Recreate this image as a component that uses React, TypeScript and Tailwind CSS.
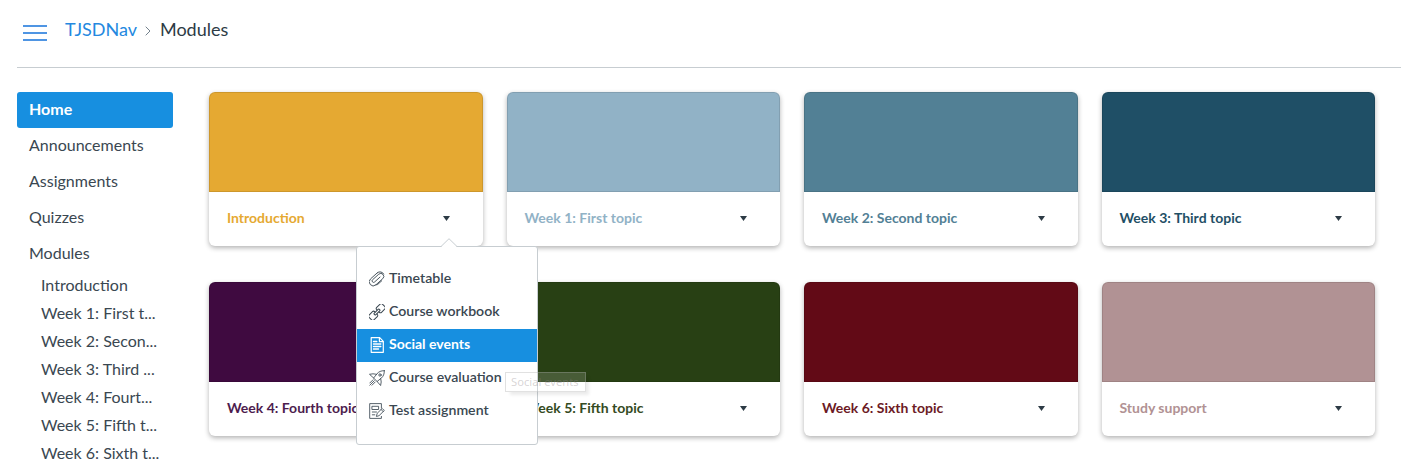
import React from 'react';

const sections = ['Announcements', 'Assignments', 'Quizzes', 'Modules'];
const moduleLinks = [
  'Introduction',
  'Week 1: First t...',
  'Week 2: Secon...',
  'Week 3: Third ...',
  'Week 4: Fourt...',
  'Week 5: Fifth t...',
  'Week 6: Sixth t...',
];

const cards = [
  { title: 'Introduction', bg: 'bg-[#e5a932]', text: 'text-[#e5a932]', menu: true },
  { title: 'Week 1: First topic', bg: 'bg-[#91b2c6]', text: 'text-[#91b2c6]' },
  { title: 'Week 2: Second topic', bg: 'bg-[#528095]', text: 'text-[#528095]' },
  { title: 'Week 3: Third topic', bg: 'bg-[#1f4f66]', text: 'text-[#1f4f66]' },
  { title: 'Week 4: Fourth topic', bg: 'bg-[#3f0a40]', text: 'text-[#4d1c4e]' },
  { title: 'Week 5: Fifth topic', bg: 'bg-[#284014]', text: 'text-[#344a22]' },
  { title: 'Week 6: Sixth topic', bg: 'bg-[#620a16]', text: 'text-[#6c1a25]' },
  { title: 'Study support', bg: 'bg-[#b19294]', text: 'text-[#b19294]' },
];

function Icon({ children }: { children: React.ReactNode }) {
  return (
    <svg
      viewBox="0 0 16 16"
      className="block h-4 w-4 shrink-0"
      fill="none"
      stroke="currentColor"
      strokeWidth="0.85"
      strokeLinejoin="round"
      strokeLinecap="round"
    >
      {children}
    </svg>
  );
}

const ClipIcon = () => (
  <Icon>
    <g transform="rotate(-42 8 8)">
      <path d="M11.500 8H4.200a1.500 1.500 0 0 1 0-3h8.300a3 3 0 0 1 0 6H3.300a4 4 0 0 1-4-4 4 4 0 0 1 4-4h9.200" transform="translate(0 .6)" />
      <path d="M12.500 3.600a4 4 0 0 1 3.800 5.200M3.300 11.600a4 4 0 0 0 1.500.9h5.500" />
    </g>
  </Icon>
);

const LinkIcon = () => (
  <Icon>
    <g transform="rotate(-45 8 8)" strokeWidth="1">
      <path d="M6.600 6.400V6.200A1.600 1.600 0 0 0 5 4.600H.2A1.600 1.600 0 0 0-1.400 6.200v3.600A1.600 1.600 0 0 0 .2 11.400H5A1.600 1.600 0 0 0 6.600 9.800v-.2" />
      <path d="M9.400 6.400v-.2A1.600 1.600 0 0 1 11 4.600h4.800a1.600 1.600 0 0 1 1.600 1.600v3.600a1.600 1.600 0 0 1-1.600 1.600H11a1.600 1.600 0 0 1-1.600-1.600v-.2" />
      <rect x="4.500" y="6.900" width="7" height="2.200" rx=".5" />
    </g>
  </Icon>
);

const PageIcon = () => (
  <Icon>
    <path d="M2.200.7h8.500l3.600 3.600v11H2.200z" strokeWidth="1.200" />
    <path d="M10.400.9v3.700h3.700" strokeWidth="1.200" />
    <path d="M4.500 4.500h3.300M4.500 7h7.300M4.500 9.500h7.300M4.500 12h5" strokeWidth="1.400" />
  </Icon>
);

const RocketIcon = () => (
  <Icon>
    <path d="M15.300.7c-3.400-.1-5.500 1-7.300 3.100l-3.400 4.200 3.500 3.500 4.200-3.400c2.100-1.900 3.100-4 3-7.400z" />
    <path d="M7.600 4.300 4 3.800.5 4.300 4.600 8M11.700 8.400l.5 3.600-.6 3.500L8.100 11.500" />
    <circle cx="11" cy="5" r="1.200" />
    <path d="M4 9.800.8 13M6.200 12l-3.200 3.200M5.300 10.700.8 15.200" />
  </Icon>
);

const AssignmentIcon = () => (
  <Icon>
    <path d="M12.400 5V.6H.7v14.800h11.700v-2" />
    <path d="M3.300 3.300h6.300v3.200H3.300zM3.300 9h4.200M3.300 11.800h2.500" />
    <path d="m7.500 13.100.7-2.800 5-4.900 2.100 2.100-5 4.900zM12.100 6.500l2.100 2.100" />
  </Icon>
);

const menuItems = [
  { label: 'Timetable', icon: ClipIcon },
  { label: 'Course workbook', icon: LinkIcon },
  { label: 'Social events', icon: PageIcon, active: true },
  { label: 'Course evaluation', icon: RocketIcon },
  { label: 'Test assignment', icon: AssignmentIcon },
];

function CardMenu() {
  return (
    <div className="absolute top-[154px] left-[147px] z-10 h-[199px] w-[182px] rounded-[3px] border border-[#c7cdd1] bg-white py-4">
      <svg viewBox="0 0 16 9" className="absolute -top-[9px] left-[84px] h-[9px] w-4">
        <path d="M0 9 8 1l8 8z" fill="#fff" />
        <path d="M0 8.500 8 .7l8 7.800" fill="none" stroke="#c7cdd1" />
      </svg>
      {menuItems.map(({ label, icon: Glyph, active }) => (
        <div
          key={label}
          className={`flex h-[33px] items-center gap-1 pb-[3px] pl-3 leading-5 whitespace-nowrap ${
            active
              ? 'bg-[#178fe0] text-[14px] font-bold text-white'
              : 'text-[14.150px] font-semibold text-[#3a4751]'
          }`}
        >
          <span className="pt-px">
            <Glyph />
          </span>
          <span>{label}</span>
        </div>
      ))}
      <div className="absolute top-[125px] left-[148px] flex h-5 w-[81px] items-center border border-[#a8a8a8]/35 bg-white/15 pl-[5px] font-['Noto_Sans'] text-[11.200px] whitespace-nowrap text-[#8c8488]/35 shadow-[4px_4px_3px_-1px_rgba(0,0,0,0.08)]">
        Social events
      </div>
    </div>
  );
}

export default function App() {
  return (
    <div className="h-[466px] overflow-hidden bg-white pl-[17px] font-['Lato',sans-serif] text-[#2d3b45]">
      <header className="flex h-[68px] items-start border-b border-[#c7cdd1]">
        <svg viewBox="0 0 24 16" className="mt-[25px] ml-[6px] h-4 w-6" shapeRendering="crispEdges">
          <path d="M0 0h24v2H0zM0 7h24v2H0zM0 14h24v2H0z" fill="#4f95e3" />
        </svg>
        <nav className="mt-[16px] ml-[18px] flex h-[26px] items-center text-[18px]">
          <span className="text-[#2488df]">TJSDNav</span>
          <svg viewBox="0 0 6 10" className="mr-[9px] ml-[8px] mt-1 h-[10px] w-[6px]">
            <path d="m.7.7 4.300 4.300L.7 9.300" fill="none" stroke="#73818c" />
          </svg>
          <span>Modules</span>
        </nav>
      </header>
      <div className="flex pt-6">
        <aside className="w-[156px] shrink-0 text-[16px] text-[#3a4751]">
          <div className="flex h-9 items-center rounded-[3px] bg-[#178fe0] pb-0.5 pl-3 font-bold text-white">
            Home
          </div>
          {sections.map((s) => (
            <div key={s} className="flex h-9 items-center pb-0.5 pl-3">
              {s}
            </div>
          ))}
          {moduleLinks.map((m) => (
            <div key={m} className="flex h-7 items-center pb-0.5 pl-6 whitespace-nowrap">
              {m}
            </div>
          ))}
        </aside>
        <main className="mr-[26px] ml-9 grid flex-1 auto-rows-[154px] grid-cols-4 gap-x-6 gap-y-9 self-start">
          {cards.map((c) => (
            <section
              key={c.title}
              className="relative rounded-[6px] bg-white shadow-[0_2px_5px_rgba(0,0,0,0.3)]"
            >
              <div className={`h-[100px] rounded-t-[6px] border border-black/10 ${c.bg}`} />
              <div className="flex h-[52px] items-center justify-between pr-[33px] pl-[18px]">
                <span className={`pb-0.5 text-[14px] font-bold ${c.text}`}>{c.title}</span>
                <svg viewBox="0 0 7 5" className="h-[5px] w-[7px]">
                  <path d="M0 0h7L3.500 5z" fill="#2d3b45" />
                </svg>
              </div>
              {c.menu && <CardMenu />}
            </section>
          ))}
        </main>
      </div>
    </div>
  );
}
